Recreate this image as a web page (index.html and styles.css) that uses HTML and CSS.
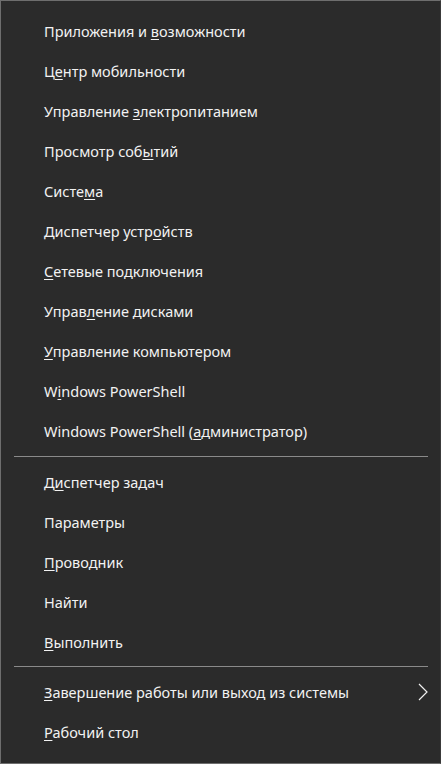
FILE: index.html
```html
<!DOCTYPE html>
<html lang="ru">
<head>
<meta charset="utf-8">
<link rel="stylesheet" href="styles.css">
</head>
<body>
<nav class="menu">
  <div class="group">
    <div class="item"><span>Приложения и <u>в</u>озможности</span></div>
    <div class="item"><span>Ц<u>е</u>нтр мобильности</span></div>
    <div class="item"><span>Управление <u>э</u>лектропитанием</span></div>
    <div class="item"><span>Просмотр соб<u>ы</u>тий</span></div>
    <div class="item"><span>Систе<u>м</u>а</span></div>
    <div class="item"><span>Диспетчер устр<u>о</u>йств</span></div>
    <div class="item"><span><u>С</u>етевые подключения</span></div>
    <div class="item"><span>Управ<u>л</u>ение дисками</span></div>
    <div class="item"><span><u>У</u>правление компьютером</span></div>
    <div class="item"><span>W<u>i</u>ndows PowerShell</span></div>
    <div class="item"><span>Windows PowerShell (<u>а</u>дминистратор)</span></div>
  </div>
  <div class="sep"></div>
  <div class="group">
    <div class="item"><span>Д<u>и</u>спетчер задач</span></div>
    <div class="item"><span>Параметры</span></div>
    <div class="item"><span><u>П</u>роводник</span></div>
    <div class="item"><span>Найти</span></div>
    <div class="item"><span><u>В</u>ыполнить</span></div>
  </div>
  <div class="sep sep-tight"></div>
  <div class="group">
    <div class="item"><span><u>З</u>авершение работы или выход из системы</span>
      <svg class="chev" width="10" height="18" viewBox="0 0 10 18"><polyline points="1,1 9,9 1,17" fill="none" stroke="#f0f0f0" stroke-width="1.2"/></svg>
    </div>
    <div class="item"><span><u>Р</u>абочий стол</span></div>
  </div>
</nav>
</body>
</html>
```

FILE: styles.css
```css
html, body {
  margin: 0;
  padding: 0;
  background: #2b2b2b;
}
.menu {
  box-sizing: border-box;
  width: 441px;
  height: 764px;
  background: #2b2b2b;
  border: 1px solid #6e6e6e;
  border-right-color: #3a3a3a;
  padding: 10px 0 12px 0;
  font-family: "Noto Sans", "Open Sans", sans-serif;
  font-size: 14.5px;
  color: #f2f2f2;
}
.group {
  display: flex;
  flex-direction: column;
}
.item {
  height: 40px;
  display: flex;
  align-items: center;
  justify-content: space-between;
  padding-left: 43px;
  padding-right: 12px;
  white-space: nowrap;
}
.item u {
  text-decoration-thickness: 1px;
  text-underline-offset: 2px;
}
.sep {
  height: 1px;
  background: #8a8a8a;
  margin: 5px 12px 5px 13px;
}
.sep-tight {
  margin-top: 4px;
}
.chev {
  display: block;
}
```
